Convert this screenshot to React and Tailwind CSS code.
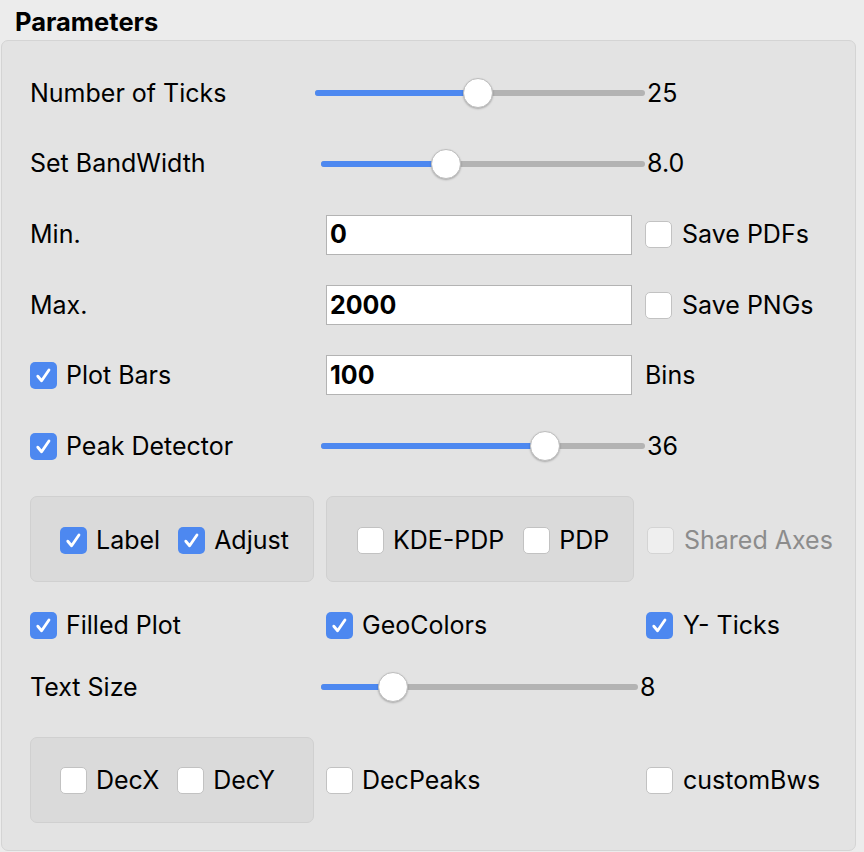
import React from 'react';

const font = { fontFamily: 'Inter, "Liberation Sans", sans-serif' };

function Check({ checked = false, disabled = false, label, gap = 'ml-[9px]' }) {
  return (
    <div className="flex items-center">
      {checked ? (
        <div className="w-[27px] h-[27px] rounded-[5px] bg-[#4d88f0] flex items-center justify-center">
          <svg width="19" height="19" viewBox="0 0 16 16" fill="none" stroke="white" strokeWidth="2.4" strokeLinecap="round" strokeLinejoin="round">
            <polyline points="3.2 8.6 6.4 12.4 12.6 3.4" />
          </svg>
        </div>
      ) : (
        <div className={`w-[27px] h-[27px] rounded-[5px] border ${disabled ? 'bg-[#efefef] border-[#d4d4d4]' : 'bg-white border-[#c2c2c2]'}`} />
      )}
      <span className={`${gap} text-[25px] leading-none ${disabled ? 'text-[#8c8c8c]' : 'text-black'}`}>{label}</span>
    </div>
  );
}

function Slider({ width, pos, value }) {
  // pos = thumb centre, in px from the left edge of the track
  return (
    <div className="flex items-center">
      <div className="relative h-[30px]" style={{ width }}>
        <div className="absolute left-0 right-0 top-[12px] h-[6px] rounded-full bg-[#b3b3b3]" />
        <div className="absolute left-0 top-[12px] h-[6px] rounded-full bg-[#4d88f0]" style={{ width: pos }} />
        <div
          className="absolute top-0 w-[30px] h-[30px] rounded-full bg-white border border-[#bdbdbd] shadow-[0_1px_2px_rgba(0,0,0,0.25)]"
          style={{ left: pos - 15 }}
        />
      </div>
      <span className="ml-[2px] text-[25px] leading-none text-black">{value}</span>
    </div>
  );
}

function Field({ value }) {
  return (
    <div className="w-[306px] h-[40px] bg-white border border-[#b3b3b3] flex items-center pl-[3px]">
      <span className="text-[25px] font-bold leading-none text-black">{value}</span>
    </div>
  );
}

function Group({ width, children }) {
  return (
    <div
      className="h-[86px] rounded-[7px] bg-[#dadada] border border-[#d0d0d0] flex items-center"
      style={{ width }}
    >
      {children}
    </div>
  );
}

export default function App() {
  return (
    <div className="w-[864px] h-[852px] bg-[#ececec] overflow-hidden" style={font}>
      <div className="pl-[15px] pt-[9px] h-[40px]">
        <span className="text-[25.5px] font-bold leading-none text-black">Parameters</span>
      </div>

      <div className="ml-[1px] w-[855px] h-[811px] rounded-[7px] bg-[#e3e3e3] border border-[#d4d4d4] pl-[28px] pt-[17px]">
        {/* sliders */}
        <div className="h-[70px] flex items-center">
          <div className="w-[285px] text-[25px] leading-none text-black">Number of Ticks</div>
          <Slider width={330} pos={163} value="25" />
        </div>
        <div className="h-[71px] flex items-center">
          <div className="w-[291px] text-[25px] leading-none text-black">Set BandWidth</div>
          <Slider width={324} pos={125} value="8.0" />
        </div>

        {/* min / max / bins */}
        <div className="h-[71px] flex items-center">
          <div className="w-[296px] text-[25px] leading-none text-black">Min.</div>
          <Field value="0" />
          <div className="ml-[13px]"><Check label="Save PDFs" gap="ml-[10px]" /></div>
        </div>
        <div className="h-[70px] flex items-center">
          <div className="w-[296px] text-[25px] leading-none text-black">Max.</div>
          <Field value="2000" />
          <div className="ml-[13px]"><Check label="Save PNGs" gap="ml-[10px]" /></div>
        </div>
        <div className="h-[70px] flex items-center">
          <div className="w-[296px]"><Check checked label="Plot Bars" /></div>
          <Field value="100" />
          <span className="ml-[13px] text-[25px] leading-none text-black">Bins</span>
        </div>
        <div className="h-[72px] flex items-center">
          <div className="w-[291px]"><Check checked label="Peak Detector" /></div>
          <Slider width={324} pos={224} value="36" />
        </div>

        {/* grouped boxes */}
        <div className="mt-[14px] flex items-center">
          <Group width={284}>
            <div className="pl-[29px] pt-[2px] flex items-center gap-[18px]">
              <Check checked label="Label" />
              <Check checked label="Adjust" />
            </div>
          </Group>
          <div className="ml-[12px]">
            <Group width={308}>
              <div className="pl-[30px] pt-[2px] flex items-center gap-[19px]">
                <Check label="KDE-PDP" />
                <Check label="PDP" />
              </div>
            </Group>
          </div>
          <div className="ml-[13px] pt-[2px]"><Check disabled label="Shared Axes" gap="ml-[10px]" /></div>
        </div>

        <div className="mt-[8px] h-[70px] flex items-center">
          <div className="w-[296px]"><Check checked label="Filled Plot" /></div>
          <div className="w-[320px]"><Check checked label="GeoColors" /></div>
          <Check checked label="Y- Ticks" gap="ml-[10px]" />
        </div>
        <div className="h-[54px] flex items-center">
          <div className="w-[291px] text-[25px] leading-none text-black">Text Size</div>
          <Slider width={317} pos={72} value="8" />
        </div>

        <div className="mt-[23px] flex items-center">
          <Group width={284}>
            <div className="pl-[29px] flex items-center gap-[18px]">
              <Check label="DecX" />
              <Check label="DecY" />
            </div>
          </Group>
          <div className="ml-[12px] w-[320px]"><Check label="DecPeaks" /></div>
          <Check label="customBws" gap="ml-[10px]" />
        </div>
      </div>
    </div>
  );
}
